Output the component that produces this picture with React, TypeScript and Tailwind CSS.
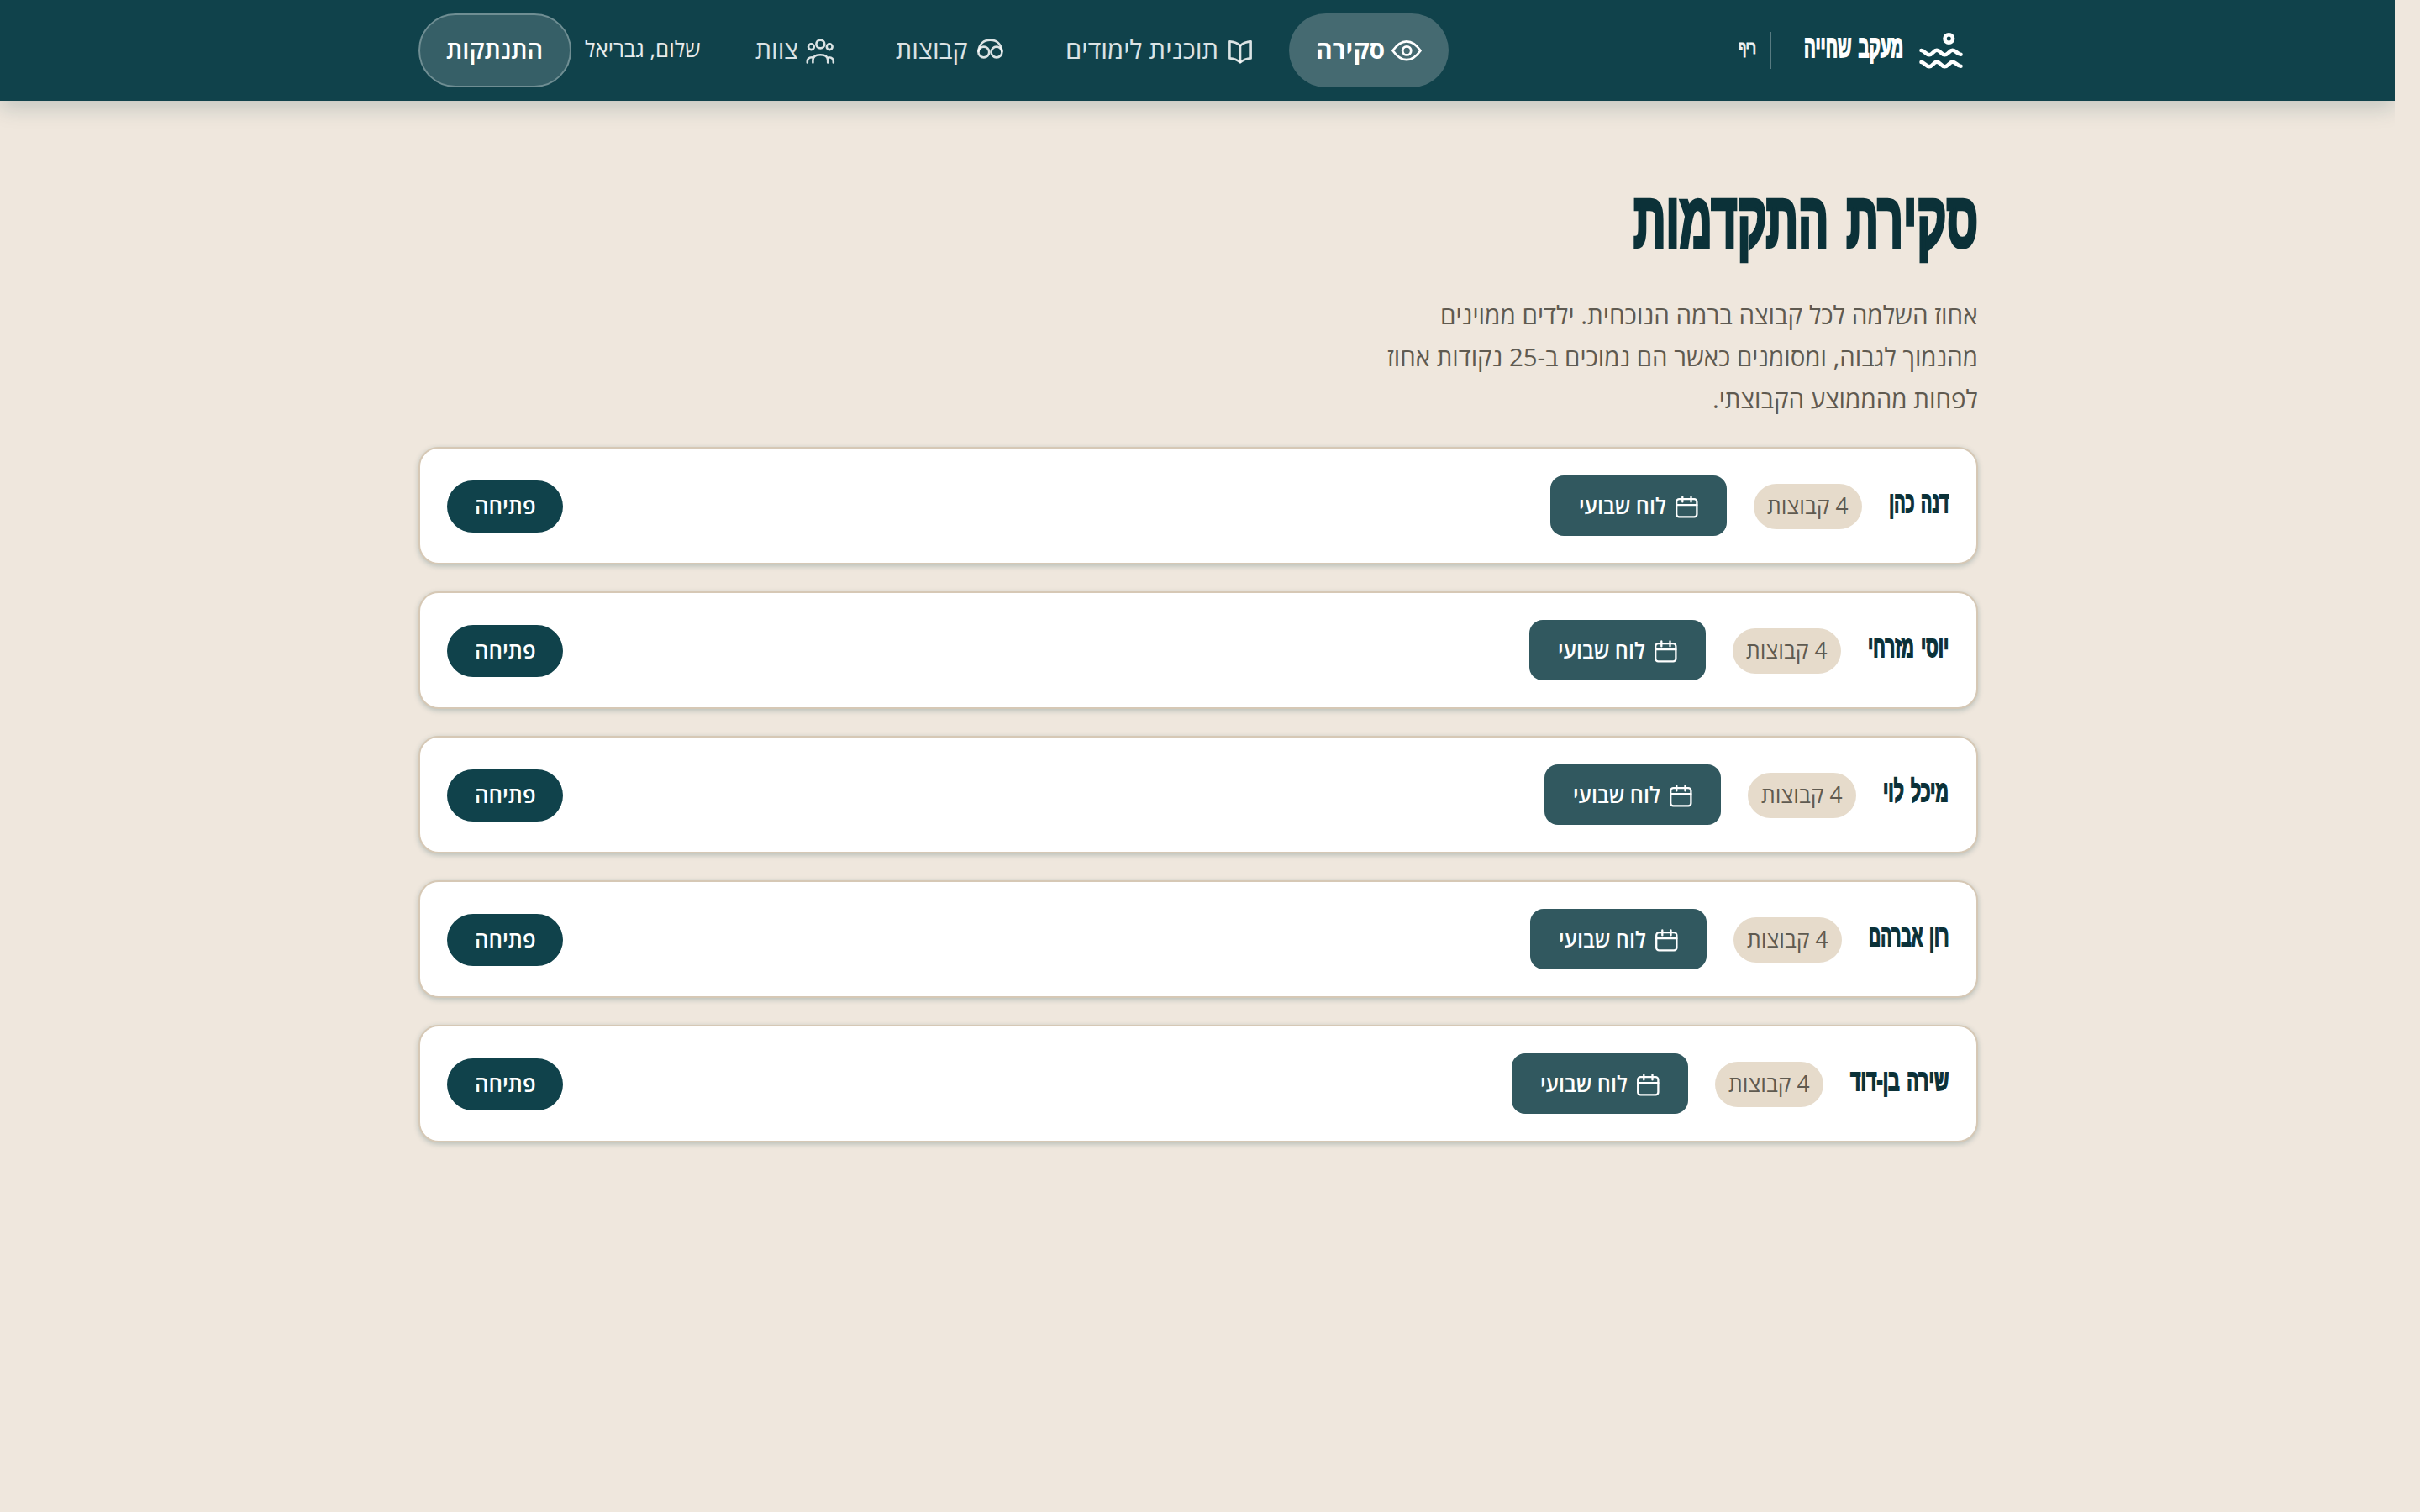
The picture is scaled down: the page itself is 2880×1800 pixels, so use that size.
import * as React from "react";

const { useLayoutEffect, useRef, useState } = React;

interface FitProps {
  width: number;
  className?: string;
  children: React.ReactNode;
}

// squeezes or stretches a single line of text to the given width
const Fit: React.FC<FitProps> = ({ width, className = "", children }) => {
  const ref = useRef<HTMLSpanElement>(null);
  const [scale, setScale] = useState(1);

  useLayoutEffect(() => {
    if (ref.current) setScale(width / ref.current.offsetWidth);
  }, [width]);

  return (
    <span className="flex shrink-0 justify-start" style={{ width }}>
      <span
        ref={ref}
        className={`block shrink-0 origin-right whitespace-nowrap ${className}`}
        style={{ transform: `scaleX(${scale})` }}
      >
        {children}
      </span>
    </span>
  );
};

interface IconProps {
  size: number;
  stroke: number;
  children: React.ReactNode;
}

const Icon: React.FC<IconProps> = ({ size, stroke, children }) => (
  <svg
    width={size}
    height={size}
    viewBox={`0 0 ${size} ${size}`}
    fill="none"
    stroke="currentColor"
    strokeWidth={stroke}
    strokeLinecap="round"
    strokeLinejoin="round"
    className="shrink-0"
  >
    {children}
  </svg>
);

const LogoIcon = () => (
  <Icon size={52} stroke={4.6}>
    <circle cx="35.3" cy="12" r="4.8" />
    <path d="M2.5 26C6 26 8 31.2 12 31.2S17 25.8 21 25.8S26 31.2 30.3 31.2S36 25.8 39.7 25.8S46 30.8 49.5 30.8" />
    <path d="M2.5 40C6 40 8 45.2 12 45.2S17 39.8 21 39.8S26 45.2 30.3 45.2S36 39.8 39.7 39.8S46 44.8 49.5 44.8" />
  </Icon>
);

const EyeIcon = () => (
  <Icon size={36} stroke={2.8}>
    <path d="M1.5 18.3C7 10.5 12 7.4 18 7.4S29 10.5 34.5 18.3C29 26 24 29.2 18 29.2S7 26 1.5 18.3Z" />
    <circle cx="18.2" cy="18.4" r="5" />
  </Icon>
);

const BookIcon = () => (
  <Icon size={36} stroke={2.6}>
    <path d="M5.4 7.4C10 7.6 14.2 9 18 12.2C21.8 9 26 7.6 30.6 7.4V27.4C26 27.6 21.8 29 18 32.4C14.2 29 10 27.6 5.4 27.4Z" />
    <path d="M18 12.2V32" />
  </Icon>
);

const GogglesIcon = () => (
  <Icon size={36} stroke={2.6}>
    <circle cx="10.8" cy="20" r="6.4" />
    <circle cx="26" cy="20" r="6.4" />
    <path d="M4.4 19C5.4 10 11 5.6 18.4 5.6S31.4 10 32.4 19" />
  </Icon>
);

const TeamIcon = () => (
  <Icon size={36} stroke={2.6}>
    <circle cx="18.3" cy="10.5" r="4.9" />
    <circle cx="7.4" cy="13.7" r="3.4" />
    <circle cx="29.2" cy="13.7" r="3.4" />
    <path d="M9.4 32.5V30C9.4 25.6 12.6 23.3 18.3 23.3S27.2 25.6 27.2 30V32.5" />
    <path d="M2.8 32.5V31.5C2.8 28.2 4.6 26.3 8.2 26.3M33.8 32.5V31.5C33.8 28.2 32 26.3 28.4 26.3" />
  </Icon>
);

const CalendarIcon = () => (
  <Icon size={32} stroke={2.3}>
    <rect x="4.2" y="8.2" width="24.2" height="21.2" rx="3.2" />
    <path d="M4.2 15.2H28.4M11.3 5.4V11.4M21.5 5.4V11.4" />
  </Icon>
);

const navItems = [
  { label: "סקירה", icon: <EyeIcon />, width: 82, active: true },
  { label: "תוכנית לימודים", icon: <BookIcon />, width: 182 },
  { label: "קבוצות", icon: <GogglesIcon />, width: 86 },
  { label: "צוות", icon: <TeamIcon />, width: 51 },
];

const instructors = [
  { name: "דנה כהן", width: 72 },
  { name: "יוסי מזרחי", width: 97 },
  { name: "מיכל לוי", width: 79 },
  { name: "רון אברהם", width: 96 },
  { name: "שירה בן-דוד", width: 118 },
];

const Header = () => (
  <header className="h-[120px] bg-[#10424b] text-white shadow-[0_8px_24px_rgba(16,66,75,0.2)]">
    <div className="mr-[496px] flex h-full w-[1856px] items-center">
      <div className="flex w-[630px] items-center ps-[18px]">
        <LogoIcon />
        <div className="ms-[19px] -mt-2">
          <Fit
            width={118}
            className="font-['Liberation_Sans'] text-[36px] leading-[60px] font-bold [word-spacing:4px] [-webkit-text-stroke:1.8px]"
          >
            מעקב שחייה
          </Fit>
        </div>
        <div className="ms-[39px] h-11 w-0.5 bg-white/30" />
        <div className="ms-4 -mt-1.5">
          <Fit
            width={21}
            className="font-['Liberation_Sans'] text-[22px] leading-8 font-bold text-white/90 [-webkit-text-stroke:1px]"
          >
            ריף
          </Fit>
        </div>
      </div>
      <nav className="flex items-center gap-2">
        {navItems.map((item) => (
          <a
            key={item.label}
            className={
              item.active
                ? "flex h-[88px] items-center gap-2 rounded-full bg-[#456a71] px-8 font-bold"
                : "flex h-[88px] items-center gap-2 rounded-full px-8 text-white/85"
            }
          >
            {item.icon}
            <Fit width={item.width} className="-mt-0.5 text-[30px] leading-10">
              {item.label}
            </Fit>
          </a>
        ))}
      </nav>
      <div className="ms-auto flex items-center gap-4">
        <Fit width={138} className="-mt-1 text-[26px] leading-10 text-white/90">
          שלום, גבריאל
        </Fit>
        <button className="flex h-[88px] w-[182px] items-center justify-center rounded-full border-2 border-[#6f8e93] bg-[#365f67]">
          <Fit width={115} className="-mt-0.5 text-[30px] leading-10 font-semibold">
            התנתקות
          </Fit>
        </button>
      </div>
    </div>
  </header>
);

const InstructorCard: React.FC<{ name: string; width: number }> = ({ name, width }) => (
  <div className="flex h-[140px] items-center gap-8 rounded-3xl border-2 border-[#d6c8b5] bg-white px-8 shadow-[0_2px_6px_rgba(16,66,75,0.25)]">
    <h2 className="-mt-2 ps-px">
      <Fit
        width={width - 1}
        className="font-['Liberation_Sans'] text-[35px] leading-[60px] font-bold text-[#0b3138] [word-spacing:4px] [-webkit-text-stroke:1.8px]"
      >
        {name}
      </Fit>
    </h2>
    <span className="mt-0.5 flex h-[54px] w-[129px] items-center justify-center rounded-full bg-[#e6dbcb] text-[#5f5a50]">
      <Fit width={97} className="-mt-0.5 text-[27px] leading-10">
        4 קבוצות
      </Fit>
    </span>
    <button className="flex h-[72px] w-[210px] items-center gap-2 rounded-2xl bg-[#31585f] ps-8 text-white">
      <CalendarIcon />
      <Fit width={104} className="text-[26px] leading-10 font-semibold">
        לוח שבועי
      </Fit>
    </button>
    <button className="ms-auto mt-0.5 flex h-[62px] w-[138px] items-center justify-center rounded-full bg-[#10424b] text-white">
      <Fit width={72} className="-mt-0.5 text-[26px] leading-10 font-semibold">
        פתיחה
      </Fit>
    </button>
  </div>
);

const App: React.FC = () => {
  return (
    <div
      dir="rtl"
      className="flex h-[1800px] w-full justify-end bg-[#efe7dd] font-['Open_Sans','Noto_Sans',sans-serif]"
    >
      <div className="w-[2850px] overflow-hidden">
        <Header />
        <main className="mr-[496px] w-[1856px] pt-22">
          <h1 className="text-[#0b3138]">
            <Fit
              width={410}
              className="font-['Liberation_Sans'] text-[92px] leading-[108px] font-bold [word-spacing:10px] [-webkit-text-stroke:4.5px]"
            >
              סקירת התקדמות
            </Fit>
          </h1>
          <div className="mt-[34px] text-[30px] leading-[50px] text-[#5f5a50]">
            <Fit width={640}>אחוז השלמה לכל קבוצה ברמה הנוכחית. ילדים ממוינים</Fit>
            <Fit width={703}>מהנמוך לגבוה, ומסומנים כאשר הם נמוכים ב-25 נקודות אחוז</Fit>
            <Fit width={316}>לפחות מהממוצע הקבוצתי.</Fit>
          </div>
          <div className="mt-8 flex flex-col gap-8">
            {instructors.map((item) => (
              <InstructorCard key={item.name} name={item.name} width={item.width} />
            ))}
          </div>
        </main>
      </div>
    </div>
  );
};

export default App;
